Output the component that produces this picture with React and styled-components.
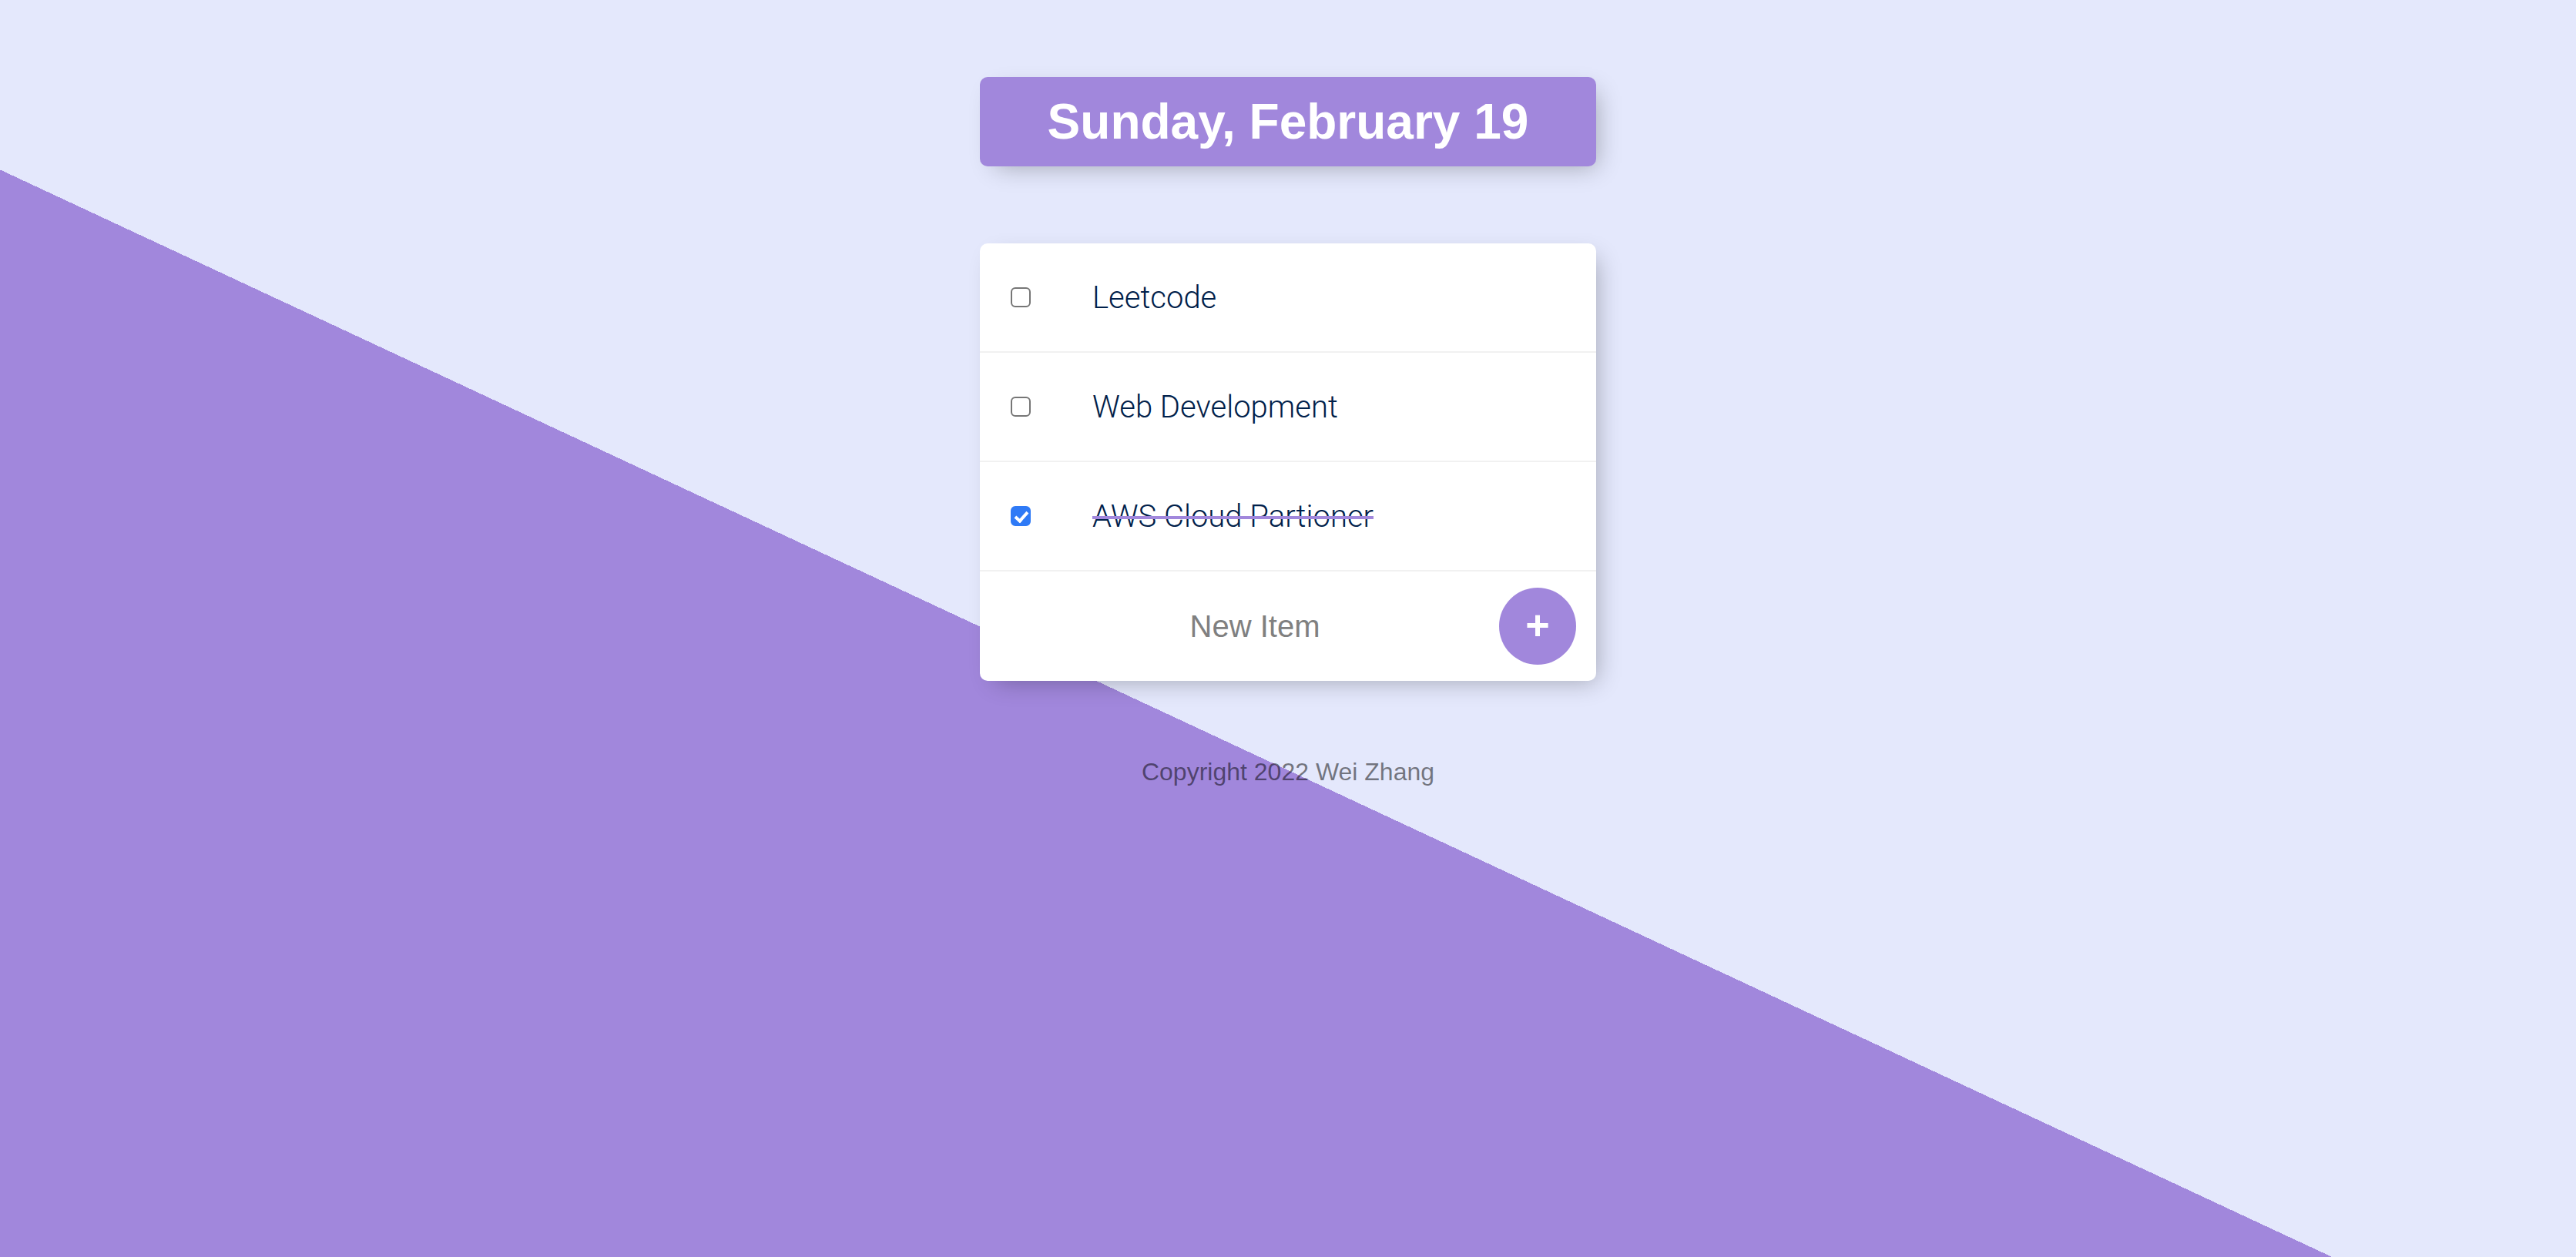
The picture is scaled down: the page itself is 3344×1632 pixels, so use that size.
import React, { useState } from 'react';
import styled, { createGlobalStyle } from 'styled-components';

const purple = '#A187DC';
const lilac = '#E4E8FC';

const GlobalStyle = createGlobalStyle`
  html {
    background-color: ${lilac};
    background-image: linear-gradient(25deg, ${purple} 50%, ${lilac} 50%);
    background-size: 100% 2000px;
    background-repeat: no-repeat;
    font-family: "Liberation Sans", Arial, sans-serif;
  }
  body {
    margin: 0;
    padding: 0 16px;
  }
`;

const Box = styled.div`
  max-width: 800px;
  margin: 100px auto;
  background: ${(p) => (p.$heading ? purple : '#fff')};
  border-radius: 10px;
  box-shadow: 10px 10px 30px -10px rgba(0, 0, 0, 0.3);
  text-align: ${(p) => (p.$heading ? 'center' : 'left')};
`;

const Title = styled.h1`
  margin: 0;
  padding: 20px;
  color: #fff;
  font-size: 64px;
  line-height: 76px;
  font-weight: 700;
`;

const Item = styled.div`
  min-height: 140px;
  display: flex;
  align-items: center;
  border-bottom: 2px solid #f1f1f1;
`;

const CheckBox = styled.input`
  appearance: none;
  flex: none;
  box-sizing: border-box;
  width: 26px;
  height: 26px;
  margin: 40px;
  border: 2px solid #767676;
  border-radius: 6px;
  background: #fff;
  position: relative;
  cursor: pointer;

  &:checked {
    background: #2f7af6;
    border-color: #2f7af6;
  }

  &:checked::after {
    content: '';
    position: absolute;
    left: 7px;
    top: 2px;
    width: 6px;
    height: 13px;
    border: solid #fff;
    border-width: 0 4px 4px 0;
    transform: rotate(42deg);
  }
`;

const ItemText = styled.p`
  margin: 0;
  padding: 40px;
  font-family: Roboto, "Liberation Sans", sans-serif;
  font-size: 40px;
  font-weight: 300;
  color: #00204a;
`;

const Label = styled.span`
  position: relative;
  display: inline-block;

  &::after {
    content: '';
    display: ${(p) => (p.$done ? 'block' : 'none')};
    position: absolute;
    left: 0;
    right: 0;
    top: 51%;
    height: 4px;
    background: ${purple};
  }
`;

const NewItemForm = styled.form`
  min-height: 142px;
  display: flex;
  align-items: center;
  margin-left: 40px;
  text-align: center;
`;

const NewItemInput = styled.input`
  box-sizing: border-box;
  width: 634px;
  height: 120px;
  padding: 0;
  border: none;
  background: transparent;
  text-align: center;
  font-family: "Liberation Sans", Arial, sans-serif;
  font-size: 40px;
  color: #00204a;

  &::placeholder {
    color: grey;
    opacity: 1;
  }

  &:focus {
    outline: none;
    box-shadow: inset 0 -6px 0 0 ${purple};
  }
`;

const AddButton = styled.button`
  flex: none;
  display: flex;
  align-items: center;
  justify-content: center;
  width: 100px;
  height: 100px;
  padding: 0 0 4px;
  border: 0;
  border-radius: 50%;
  background: ${purple};
  color: #fff;
  font-family: "Liberation Sans", Arial, sans-serif;
  font-size: 54px;
  font-weight: 700;
  line-height: 1;
  cursor: pointer;
`;

const Footer = styled.footer`
  text-align: center;
  color: rgba(0, 0, 0, 0.5);
  font-size: 32px;
  line-height: 37px;
`;

const initial = [
  { text: 'Leetcode', done: false },
  { text: 'Web Development', done: false },
  { text: 'AWS Cloud Partioner', done: true },
];

export default function App() {
  const [items, setItems] = useState(initial);
  const [draft, setDraft] = useState('');

  const toggle = (i) =>
    setItems(items.map((it, j) => (j === i ? { ...it, done: !it.done } : it)));

  const add = (e) => {
    e.preventDefault();
    if (!draft.trim()) return;
    setItems([...items, { text: draft, done: false }]);
    setDraft('');
  };

  return (
    <>
      <GlobalStyle />
      <Box $heading>
        <Title>Sunday, February 19</Title>
      </Box>
      <Box>
        {items.map((it, i) => (
          <Item key={i}>
            <CheckBox type="checkbox" checked={it.done} onChange={() => toggle(i)} />
            <ItemText>
              <Label $done={it.done}>{it.text}</Label>
            </ItemText>
          </Item>
        ))}
        <NewItemForm onSubmit={add}>
          <NewItemInput
            type="text"
            placeholder="New Item"
            autoComplete="off"
            value={draft}
            onChange={(e) => setDraft(e.target.value)}
          />
          <AddButton type="submit">+</AddButton>
        </NewItemForm>
      </Box>
      <Footer>Copyright 2022 Wei Zhang</Footer>
    </>
  );
}
